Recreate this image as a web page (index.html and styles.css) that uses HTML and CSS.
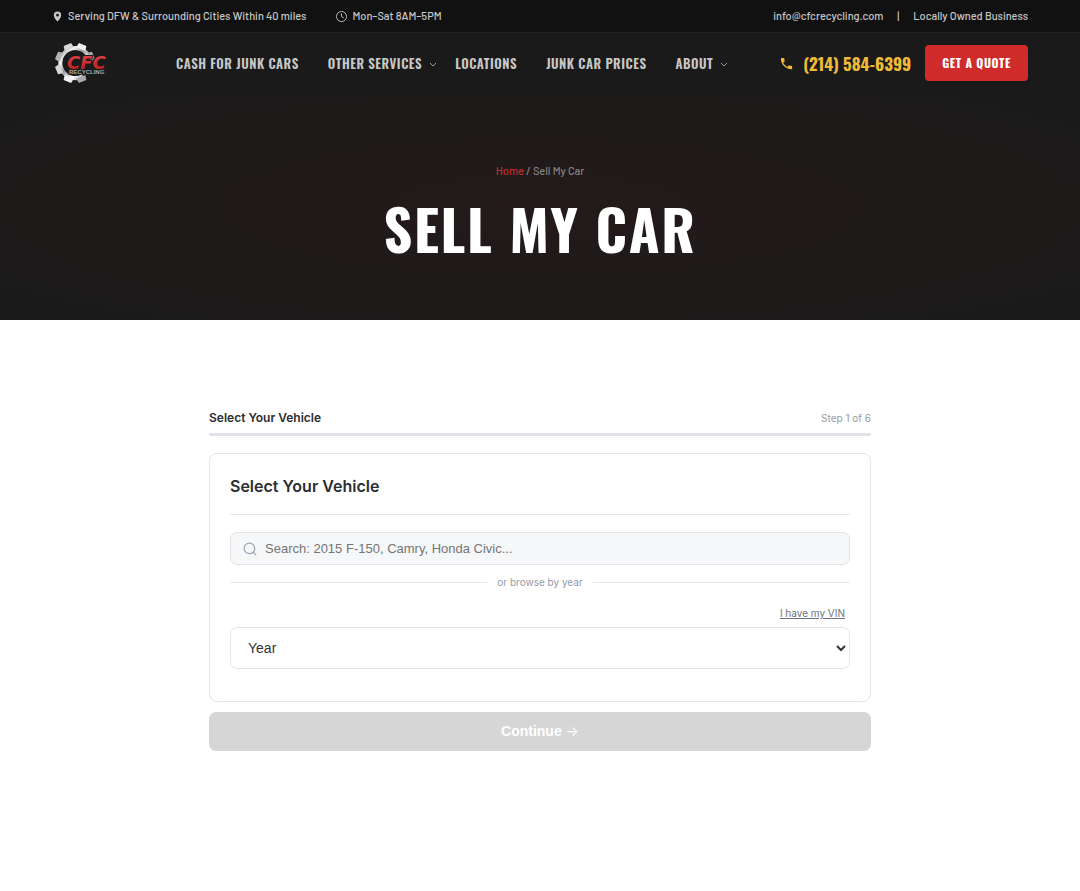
FILE: index.html
```html
<!DOCTYPE html>
<html lang="en">
<head>
    <meta charset="UTF-8">
    <meta name="viewport" content="width=device-width, initial-scale=1.0">
    <title>Sell My Car | CFC Recycling</title>
    <link rel="stylesheet" href="styles.css">
</head>
<body>
    <div class="topbar">
        <div class="container topbar-inner">
            <div class="topbar-left">
                <span class="topbar-item">
                    <svg class="pin-icon" viewBox="0 0 24 24" fill="currentColor" aria-hidden="true"><path fill-rule="evenodd" d="M12 1a8 8 0 0 0-8 8c0 6 8 14 8 14s8-8 8-14a8 8 0 0 0-8-8zm0 5a3 3 0 1 1 0 6 3 3 0 0 1 0-6z"/></svg>
                    Serving DFW &amp; Surrounding Cities Within 40 miles
                </span>
                <span class="topbar-item">
                    <svg class="clock-icon" viewBox="0 0 24 24" fill="none" stroke="currentColor" stroke-width="2" aria-hidden="true"><circle cx="12" cy="12" r="11"/><path d="M12 5v7l5 3"/></svg>
                    Mon–Sat 8AM–5PM
                </span>
            </div>
            <div class="topbar-right">
                <a href="mailto:info@cfcrecycling.com">info@cfcrecycling.com</a>
                <span>|</span>
                <span>Locally Owned Business</span>
            </div>
        </div>
    </div>

    <header class="header">
        <div class="container header-inner">
            <a class="logo" href="#" aria-label="CFC Recycling">
                <svg viewBox="0 0 60 42" aria-hidden="true">
                    <defs>
                        <linearGradient id="steel" x1="0" y1="0" x2="1" y2="1">
                            <stop offset="0" stop-color="#8f8f8f"/>
                            <stop offset=".25" stop-color="#f4f4f4"/>
                            <stop offset=".45" stop-color="#9a9a9a"/>
                            <stop offset=".7" stop-color="#ffffff"/>
                            <stop offset="1" stop-color="#8a8a8a"/>
                        </linearGradient>
                        <linearGradient id="red" x1="0" y1="0" x2="0" y2="1">
                            <stop offset="0" stop-color="#e8474a"/>
                            <stop offset="1" stop-color="#b0181c"/>
                        </linearGradient>
                        <path id="tooth" d="M18 6l1-5h8l1 5z"/>
                    </defs>
                    <path fill="none" stroke="url(#steel)" stroke-width="4" d="M31 34A15 15 0 1 1 36 13"/>
                    <g fill="#d8d8d8">
                        <use href="#tooth" transform="rotate(67.5 23 21)" fill="#a8a8a8"/>
                        <use href="#tooth" transform="rotate(22.5 23 21)" fill="#f2f2f2"/>
                        <use href="#tooth" transform="rotate(-22.5 23 21)"/>
                        <use href="#tooth" transform="rotate(-67.5 23 21)" fill="#b4b4b4"/>
                        <use href="#tooth" transform="rotate(-112.5 23 21)"/>
                        <use href="#tooth" transform="rotate(-157.5 23 21)" fill="#f2f2f2"/>
                        <use href="#tooth" transform="rotate(157.5 23 21)" fill="#a8a8a8"/>
                    </g>
                    <text class="logo-name" x="15" y="27" fill="url(#red)">CFC</text>
                    <text class="logo-sub" x="17" y="32">RECYCLING</text>
                </svg>
            </a>
            <nav class="nav">
                <a href="#">Cash for Junk Cars</a>
                <a class="has-menu" href="#">Other Services
                    <svg class="chevron" viewBox="0 0 8 8" aria-hidden="true"><path d="M1 4l3 3 3-3"/></svg>
                </a>
                <a href="#">Locations</a>
                <a href="#">Junk Car Prices</a>
                <a class="has-menu" href="#">About
                    <svg class="chevron" viewBox="0 0 8 8" aria-hidden="true"><path d="M1 4l3 3 3-3"/></svg>
                </a>
            </nav>
            <div class="header-actions">
                <a class="phone" href="tel:2145846399">
                    <svg viewBox="0 0 24 24" fill="currentColor" aria-hidden="true"><path d="M6.6 10.8c1.4 2.8 3.8 5.1 6.6 6.6l2.2-2.2c.3-.3.7-.4 1-.2 1.1.4 2.3.6 3.6.6.6 0 1 .4 1 1V20c0 .6-.4 1-1 1C10.6 21 3 13.4 3 4c0-.6.4-1 1-1h3.5c.6 0 1 .4 1 1 0 1.2.2 2.4.6 3.6.1.3 0 .7-.2 1z"/></svg>
                    (214) 584-6399
                </a>
                <a class="quote-btn" href="#quote">Get a Quote</a>
            </div>
        </div>
    </header>

    <section class="hero">
        <div class="breadcrumb"><a href="#">Home</a> / Sell My Car</div>
        <h1>Sell My Car</h1>
    </section>

    <main class="form-section">
        <form class="quote-form" id="quote">
            <div class="progress-head">
                <span class="progress-title">Select Your Vehicle</span>
                <span class="progress-step">Step 1 of 6</span>
            </div>
            <div class="progress-track"></div>

            <div class="card">
                <h2>Select Your Vehicle</h2>
                <div class="search">
                    <svg viewBox="0 0 24 24" aria-hidden="true"><circle cx="11" cy="11" r="9"/><path d="M18 18l4 4"/></svg>
                    <input type="text" aria-label="Search vehicles" placeholder="Search: 2015 F-150, Camry, Honda Civic...">
                </div>
                <div class="divider">or browse by year</div>
                <div class="vin-row"><a href="#">I have my VIN</a></div>
                <select class="year-select" aria-label="Year">
                    <option>Year</option>
                </select>
            </div>

            <button class="continue-btn" type="button" disabled>Continue <span class="arrow">→</span></button>
        </form>
    </main>
</body>
</html>
```

FILE: styles.css
```css
* {
    box-sizing: border-box;
}
body {
    margin: 0;
    background: #fff;
    color: #2b2d30;
    font-family: "Barlow", "Roboto", sans-serif;
}
a {
    color: inherit;
    text-decoration: none;
}
.container {
    max-width: 1180px;
    margin: 0 auto;
    padding: 0 52px;
}

/* Top bar */
.topbar {
    background: #111;
    border-bottom: 1px solid #242424;
    color: #c8c8c8;
    font-size: 11px;
    font-weight: 500;
    line-height: 16px;
}
.topbar-inner {
    display: flex;
    justify-content: space-between;
    padding-top: 8px;
    padding-bottom: 8px;
}
.topbar-left {
    display: flex;
    gap: 30px;
}
.topbar-right {
    display: flex;
    gap: 14px;
}
.topbar-item {
    display: flex;
    align-items: center;
    gap: 5px;
}
.topbar-item svg {
    width: 11px;
    height: 11px;
}

/* Header */
.header {
    background: #1a1a1a;
}
.header-inner {
    display: flex;
    align-items: center;
    height: 60px;
}
.logo svg {
    display: block;
    width: 60px;
    height: 42px;
}
.logo-name {
    font: italic bold 18px "DejaVu Sans", sans-serif;
    stroke: #1a1a1a;
    stroke-width: 2px;
    paint-order: stroke;
}
.logo-sub {
    font: bold 6px "Liberation Sans", sans-serif;
    fill: #aaa;
    stroke: #1a1a1a;
    stroke-width: 2px;
    paint-order: stroke;
}
.nav {
    display: flex;
    gap: 29px;
    margin-left: 64px;
    color: #c8c8c8;
    font-family: "Oswald", "Roboto", sans-serif;
    font-size: 13px;
    font-weight: 600;
    letter-spacing: 0.04em;
    line-height: 20px;
    text-transform: uppercase;
    white-space: nowrap;
}
.has-menu {
    display: flex;
    align-items: center;
    gap: 7px;
    margin-right: -11px;
}
.chevron {
    width: 8px;
    height: 8px;
    fill: none;
    stroke: #999;
}
.header-actions {
    display: flex;
    align-items: center;
    gap: 14px;
    margin-left: auto;
    font-family: "Oswald", "Roboto", sans-serif;
    white-space: nowrap;
}
.phone {
    display: flex;
    align-items: center;
    gap: 9px;
    color: #f0bb38;
    font-size: 17px;
    font-weight: 700;
}
.phone svg {
    width: 15px;
    height: 15px;
}
.quote-btn {
    padding: 8px 17px;
    border-radius: 4px;
    background: #cf2b2b;
    color: #fff;
    font-size: 12px;
    font-weight: 700;
    letter-spacing: 0.05em;
    line-height: 20px;
    text-transform: uppercase;
}

/* Hero */
.hero {
    padding: 69px 20px 57px;
    background: radial-gradient(ellipse at center, #241a1a 0%, #1a1a1a 100%);
    text-align: center;
}
.breadcrumb {
    color: #858080;
    font-size: 11px;
    font-weight: 500;
    line-height: 18px;
}
.breadcrumb a {
    color: #c42d2d;
}
h1 {
    margin: 13px 0 0;
    color: #fff;
    font-family: "Oswald", "Roboto", sans-serif;
    font-size: 56px;
    font-weight: 700;
    letter-spacing: 0.03em;
    line-height: 70px;
    text-transform: uppercase;
}

/* Vehicle form */
.form-section {
    padding: 88px 20px 140px;
    font-family: "Inter", sans-serif;
}
.quote-form {
    max-width: 662px;
    margin: 0 auto;
}
.progress-head {
    display: flex;
    justify-content: space-between;
    align-items: center;
    line-height: 20px;
}
.progress-title {
    font-size: 12px;
    font-weight: 600;
}
.progress-step {
    color: #959ba6;
    font-size: 10px;
}
.progress-track {
    height: 3px;
    margin-top: 5px;
    border-radius: 2px;
    background: #dfe2e8;
}
.card {
    margin-top: 17px;
    padding: 20px 20px 32px;
    border: 1px solid #e5e6e9;
    border-radius: 8px;
}
h2 {
    margin: 0 0 17px;
    padding-bottom: 16px;
    border-bottom: 1px solid #e2e4e7;
    font-size: 16px;
    font-weight: 600;
    line-height: 24px;
}
.search {
    display: flex;
    align-items: center;
    gap: 8px;
    height: 33px;
    padding: 0 12px;
    border: 1px solid #e1e4e8;
    border-radius: 7px;
    background: #f6f7f9;
}
.search svg {
    width: 14px;
    height: 14px;
    fill: none;
    stroke: #9aa1b0;
    stroke-width: 2;
    stroke-linecap: round;
}
.search input {
    flex: 1;
    padding: 0;
    border: 0;
    outline: 0;
    background: transparent;
    font: 13px "Liberation Sans", Arial, sans-serif;
}
.search input::placeholder {
    color: #757575;
}
.divider {
    display: flex;
    align-items: center;
    gap: 10px;
    margin-top: 9px;
    color: #959ba6;
    font-size: 10px;
    line-height: 16px;
}
.divider::before,
.divider::after {
    content: "";
    flex: 1;
    height: 1px;
    background: #e5e7ea;
}
.vin-row {
    margin-top: 15px;
    padding-right: 5px;
    color: #6d737e;
    font-size: 10px;
    line-height: 16px;
    text-align: right;
}
.vin-row a {
    text-decoration: underline;
}
.year-select {
    display: block;
    width: 100%;
    height: 42px;
    margin-top: 6px;
    padding: 0 0 0 13px;
    border: 1px solid #e4e6ea;
    border-radius: 7px;
    background: #fff;
    color: #333;
    font: 14px "Liberation Sans", Arial, sans-serif;
}
.continue-btn {
    display: block;
    width: 100%;
    height: 39px;
    margin-top: 10px;
    padding-bottom: 3px;
    border: 0;
    border-radius: 7px;
    background: #d6d6d6;
    color: #fff;
    font: bold 14px "Liberation Sans", Arial, sans-serif;
}
.arrow {
    font-family: "Inter", sans-serif;
    font-weight: 400;
}
```
